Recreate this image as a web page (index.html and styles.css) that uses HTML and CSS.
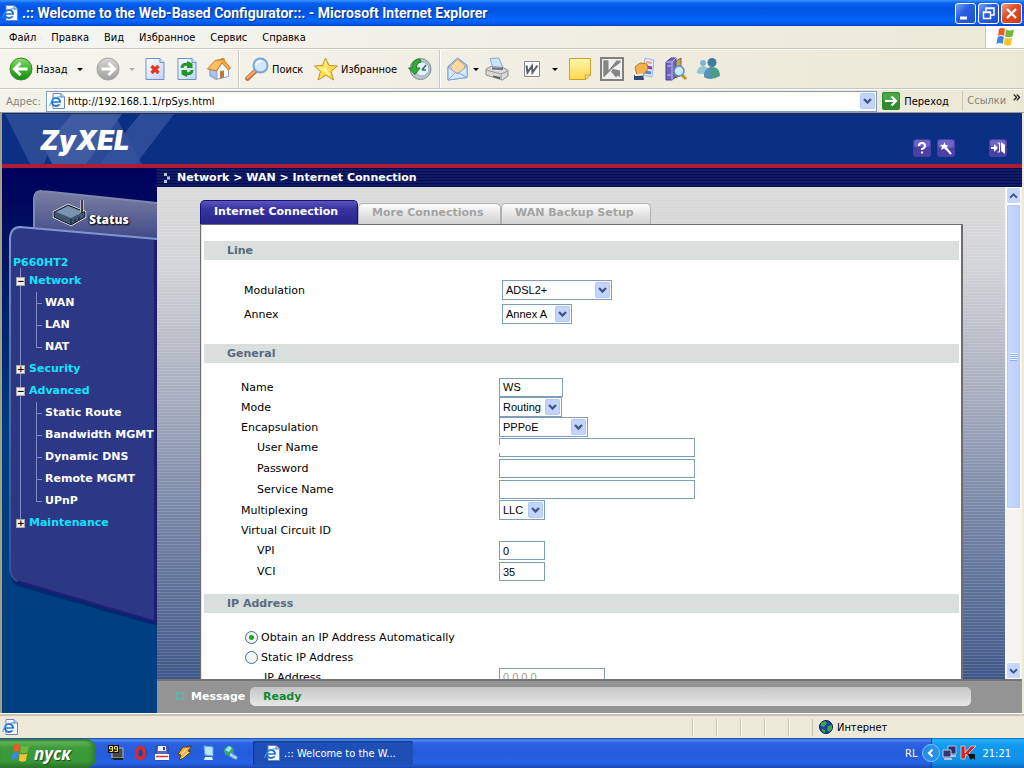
FILE: index.html
```html
<!DOCTYPE html>
<html lang="ru">
<head>
<meta charset="utf-8">
<title>.:: Welcome to the Web-Based Configurator::.</title>
<link rel="stylesheet" href="styles.css">
</head>
<body>
<svg class="defs" aria-hidden="true">
  <defs>
    <linearGradient id="g-green" x1="0" y1="0" x2="0" y2="1"><stop offset="0" stop-color="#8fdc72"/><stop offset=".5" stop-color="#3db52b"/><stop offset="1" stop-color="#1d8a14"/></linearGradient>
    <linearGradient id="g-gray" x1="0" y1="0" x2="0" y2="1"><stop offset="0" stop-color="#d4d4d2"/><stop offset="1" stop-color="#a0a09e"/></linearGradient>
    <linearGradient id="g-page" x1="0" y1="0" x2="1" y2="1"><stop offset="0" stop-color="#fff"/><stop offset="1" stop-color="#bcd2fa"/></linearGradient>
    <linearGradient id="g-note" x1="0" y1="0" x2="0" y2="1"><stop offset="0" stop-color="#fff6ae"/><stop offset="1" stop-color="#ffd84e"/></linearGradient>
    <linearGradient id="g-tab" x1="0" y1="0" x2="0" y2="1"><stop offset="0" stop-color="#7a80a2"/><stop offset="1" stop-color="#3c4586"/></linearGradient>
    <linearGradient id="g-edge" x1="0" y1="0" x2="0" y2="1"><stop offset="0" stop-color="#8398d2"/><stop offset=".3" stop-color="#5a74ba"/><stop offset="1" stop-color="#33509a"/></linearGradient>
    <symbol id="ie" viewBox="0 0 16 16">
      <path d="M4 .5h8l3.500 3.500v11.500H4z" fill="#f4f7ff" stroke="#6f83b5"/><path d="M12 .5V4h3.500" fill="#c9d5f2" stroke="#6f83b5"/>
      <circle cx="7" cy="9" r="4" fill="#fff" stroke="#1d6fd0" stroke-width="2"/><path d="M3 9h8" stroke="#1d6fd0" stroke-width="1.500"/><path d="M9 10.500h3" stroke="#f4f7ff" stroke-width="1.500"/>
      <path d="M1 13C0 8 8 2.500 13 4" fill="none" stroke="#4ba3ef"/>
    </symbol>
    <symbol id="flag" viewBox="0 0 20 20">
      <path d="M4 2Q7 0 10 2L9 9Q6 7 3 9z" fill="#f0582a"/><path d="M11 2.500Q14 4.500 19 2.500L17.500 9.500Q13 11 10 9.500z" fill="#6fb83a"/>
      <path d="M2.800 10Q6 8 8.800 10L7.800 17Q5 15 1.400 17z" fill="#3f86e4"/><path d="M9.800 10.500Q13 12.300 17.200 10.500L15.800 18Q12 19.500 8.800 17.500z" fill="#f7c32e"/>
    </symbol>
    <symbol id="chev" viewBox="0 0 15 16"><rect x=".5" y=".5" width="14" height="15" rx="1" fill="#c4d5fd" stroke="#b3c7f5"/><path d="M4 6l3.500 3.500L11 6" fill="none" stroke="#41588c" stroke-width="2.400"/></symbol>
  </defs>
</svg>

<div class="window">
  <header class="titlebar">
    <svg class="i16"><use href="#ie"/></svg>
    <h1>.:: Welcome to the Web-Based Configurator::. - Microsoft Internet Explorer</h1>
    <div class="winbtns">
      <button aria-label="Свернуть"><svg viewBox="0 0 19 19"><path d="M4 14h7" stroke="#fff" stroke-width="3"/></svg></button>
      <button aria-label="Восстановить"><svg viewBox="0 0 19 19"><path d="M7 7V4h8v7h-3M4.500 8.500h7v6h-7zM4 8h8M7 4.500h8" fill="none" stroke="#fff" stroke-width="1.500"/></svg></button>
      <button class="close" aria-label="Закрыть"><svg viewBox="0 0 19 19"><path d="M5 5l9 9M14 5l-9 9" stroke="#fff" stroke-width="2.400"/></svg></button>
    </div>
  </header>

  <nav class="menubar">
    <button>Файл</button><button>Правка</button><button>Вид</button><button>Избранное</button><button>Сервис</button><button>Справка</button>
    <span class="throbber"><svg viewBox="0 0 20 20"><use href="#flag"/></svg></span>
  </nav>

  <div class="toolbar">
    <button class="tb back"><svg class="i24" viewBox="0 0 24 24"><circle cx="12" cy="12" r="11" fill="url(#g-green)" stroke="#36862a"/><path d="M18.500 12H6M11.500 6L5.500 12l6 6" fill="none" stroke="#fff" stroke-width="3"/></svg><span>Назад</span><i class="drop"></i></button>
    <button class="tb fwd" aria-label="Вперед"><svg class="i24" viewBox="0 0 24 24"><circle cx="12" cy="12" r="11" fill="url(#g-gray)" stroke="#a3a3a0"/><path d="M5.500 12H18M12.500 6l6 6-6 6" fill="none" stroke="#fff" stroke-width="3"/></svg><i class="drop off"></i></button>
    <button class="tb" aria-label="Остановить"><svg class="i24" viewBox="0 0 24 24"><path d="M3 1.500h14l4 4v17H3z" fill="url(#g-page)" stroke="#6d8fcb"/><path d="M17 1.500v4h4" fill="#dfe9fd" stroke="#6d8fcb"/><path d="M8.500 9l7 7M15.500 9l-7 7" stroke="#e8351b" stroke-width="3.400"/></svg></button>
    <button class="tb" aria-label="Обновить"><svg class="i24" viewBox="0 0 24 24"><path d="M3 1.500h14l4 4v17H3z" fill="url(#g-page)" stroke="#6d8fcb"/><path d="M17 1.500v4h4" fill="#dfe9fd" stroke="#6d8fcb"/><path d="M7 11Q7 6.500 13 7.500M17 13Q17 17.500 11 16.500" fill="none" stroke="#1d9a25" stroke-width="3"/><path d="M12 4l5.500 2.500V11H12zM12 20l-5.500-2.500V13H12z" fill="#1d9a25"/></svg></button>
    <button class="tb" aria-label="Домой"><svg class="i24" viewBox="0 0 24 24"><path d="M14 1.500h3.500V7H14z" fill="#b8422a"/><path d="M3 12v7l6 3.500 12.500-3V12L15.500 5z" fill="#f6f8fd" stroke="#8ba4cf"/><path d="M3 12l5-2 2 4v8L3 18z" fill="#a9c4ee" stroke="#8ba4cf"/><path d="M13 14l4-.5v7l-4 1z" fill="#b97a3c"/><path d="M8 3.500L16 2l7.500 9-2 2L15 6l-5.500 8L.5 12z" fill="#f7a73f" stroke="#cc7624"/><path d="M8 4L15 4.500 9 13 1.500 11.500z" fill="#fbc167"/></svg></button>
    <span class="sep"></span>
    <button class="tb search"><svg class="i24" viewBox="0 0 24 24"><path d="M2.500 21.500l8-7.500" stroke="#b8672d" stroke-width="4.500" stroke-linecap="round"/><path d="M2.500 21l7.500-7" stroke="#f2a566" stroke-width="2.500" stroke-linecap="round"/><circle cx="15.500" cy="8.500" r="7" fill="#cfe8fc" stroke="#7ba5d8" stroke-width="2"/><path d="M11 8q1-4 5-4" fill="none" stroke="#fff" stroke-width="2"/></svg><span>Поиск</span></button>
    <button class="tb fav"><svg class="i24" viewBox="0 0 24 24"><path d="M11.500 1l3.500 7.500 8.500.5-6.500 5.500L19.500 23 12 18l-8 5 2.500-8.500L.5 9 8.500 8.500z" fill="#ffe14d" stroke="#c98c1d"/><path d="M11.500 4v11M5 11l6 2M15 18l-3-5" stroke="#fff6b4" stroke-width="1.500"/></svg><span>Избранное</span></button>
    <button class="tb" aria-label="Журнал"><svg class="i24" viewBox="0 0 24 24"><circle cx="12.500" cy="12" r="10.500" fill="#b8c6cf" stroke="#7f9099"/><circle cx="14" cy="12" r="7" fill="#e6f3fc" stroke="#92aabb"/><path d="M14 13l4-5M14 13h4" stroke="#47627e" stroke-width="1.700"/><path d="M12 2Q3 3 4 11H.5L7 17.500 12 11H8.500Q8 6 13 5z" fill="#39a935" stroke="#1c7f22"/></svg></button>
    <span class="sep"></span>
    <button class="tb mail" aria-label="Почта"><svg class="i24" viewBox="0 0 24 24"><path d="M2 9.500L11.500 1 21 8v12.500L2 23z" fill="#a9ccf5" stroke="#6b93cc"/><path d="M5 9l6.500-6.500L18.500 8v6L11 16 5 13z" fill="#ffd9a1" stroke="#e7a35b"/><path d="M2 10l9.500 7L21 9v11.500L2 23z" fill="#d7e9fd" stroke="#7ea4d8"/><path d="M2 23l7.500-7.500M21 20.500L13 16" stroke="#7ea4d8"/></svg><i class="drop"></i></button>
    <button class="tb" aria-label="Печать"><svg class="i24" viewBox="0 0 24 24"><path d="M5 1.500L14 1l4 10H8z" fill="#cfe3fd" stroke="#84a8dd"/><path d="M1 12l5-2.500 12 1 5 3V19l-5.500 4L1 18z" fill="#d9d9d8" stroke="#8e8e92"/><path d="M1 13l15 4 7-3M16 17v6" fill="none" stroke="#98989c"/><path d="M8 18.500l7 1.500v2L8 20z" fill="#57585c"/><path d="M7 11.500l11 .5" stroke="#707178" stroke-width="2"/></svg></button>
    <button class="tb word" aria-label="Word"><svg class="i16" viewBox="0 0 16 16"><path d="M.5.500h15v15H.5z" fill="#fafafa" stroke="#85898d"/><path d="M2.500 4.500l1 7L8 5l.5 6.500 5-7" fill="none" stroke="#5a5e66" stroke-width="2"/></svg><i class="drop"></i></button>
    <button class="tb" aria-label="Заметка"><svg class="i24" viewBox="0 0 24 24"><path d="M1.500 1.500h21V18l-5 4.500h-16z" fill="url(#g-note)" stroke="#d0a02c"/><path d="M17.500 22.500V18h5z" fill="#fff0a0" stroke="#d0a02c"/></svg></button>
    <button class="tb" aria-label="Антивирус"><svg class="i24" viewBox="0 0 24 24"><path d="M1 1h22v22H1z" fill="#f0f0f0" stroke="#808080" stroke-width="2"/><path d="M3.500 3.500h5v10l8-10h4v2L12 12l-8.500 8.500z" fill="#858585"/><path d="M3.500 3.500h4V15l-4 5z" fill="#858585"/><path d="M13 12l7 1.500v7l-2-2-2 2-5-6z" fill="#858585"/></svg></button>
    <button class="tb" aria-label="Публикации"><svg class="i24" viewBox="0 0 24 24"><path d="M13 1l9 2-2 17-10-2z" fill="#e3ebfd" stroke="#9fb2df"/><path d="M14 5l6 1" stroke="#f0a08e" stroke-width="2"/><path d="M14 10l6 1" stroke="#8a3fb5" stroke-width="3"/><path d="M13 15l6 1" stroke="#4a86e8" stroke-width="3"/><path d="M3 10l5-4 7 1 1 5-4 5-7 1z" fill="#f5b24c" stroke="#b77b2b"/><path d="M2 18l9-1 1 6H2z" fill="#35457d"/><path d="M3 17.500l8-1v2L3 19z" fill="#fff"/></svg></button>
    <button class="tb" aria-label="Справочники"><svg class="i24" viewBox="0 0 24 24"><path d="M2 5l5-4h5v19l-4 3H2z" fill="#7166bf" stroke="#443a8c"/><path d="M2 5h6v18M8 5l4-4M3 9h4M3 18h4" fill="none" stroke="#c4bdf2"/><path d="M12 4l5-3v17l-5 3z" fill="#b8a268" stroke="#7d6b39"/><path d="M17 17l5 5" stroke="#c79120" stroke-width="3"/><circle cx="15" cy="14" r="5" fill="#c8ecff" stroke="#5a8bc2" stroke-width="1.500"/></svg></button>
    <button class="tb" aria-label="Messenger"><svg class="i24" viewBox="0 0 24 24"><circle cx="7" cy="6" r="3" fill="#81b7d3"/><path d="M.5 16Q2 9 7 9t5 7q-5 2-11.500 0z" fill="#91c8d0"/><circle cx="16" cy="5.500" r="4.500" fill="#3e7c9a"/><path d="M8 20q0-10 8-10t8 9q-8 5-16 1z" fill="#4a9d86"/><path d="M8 20q0-10 8-10-3 6 0 12-5 0-8-2z" fill="#5b8fbb"/></svg></button>
  </div>

  <form class="address">
    <label for="url">Адрес:</label>
    <div class="urlbox"><svg class="i16"><use href="#ie"/></svg><input id="url" value="http://192.168.1.1/rpSys.html"><button type="button" aria-label="Список"><svg viewBox="0 0 15 16"><use href="#chev"/></svg></button></div>
    <button class="go" type="button"><svg viewBox="0 0 18 18"><rect width="18" height="18" rx="2" fill="#2f8a30"/><rect x="1" y="1" width="16" height="8" rx="2" fill="#4aa748"/><path d="M3 9h11M9.500 4.500L14 9l-4.500 4.500" fill="none" stroke="#fff" stroke-width="2.200"/></svg><span>Переход</span></button>
    <a class="links" href="#">Ссылки</a><span class="more">»</span>
  </form>

  <div class="site">
    <header class="banner">
      <svg class="beams" width="200" height="50" viewBox="0 0 200 50"><path d="M3 0h67L54 20l-12 30H28z" fill="#2b4a96"/><path d="M70 0h42l28 50H52l-10-18z" fill="#2b4a96"/><path d="M70 0L42 34l8 16h34l36-50z" fill="#4560a5" opacity=".8"/><path d="M138 0h34l-38 50H98z" fill="#34539d" opacity=".8"/></svg>
      <a class="logo" href="#">ZyXEL</a>
      <div class="tools">
        <button aria-label="Help"><svg viewBox="0 0 18 18"><rect width="18" height="18" rx="3" fill="#4a3fa4"/><rect x="1" y="1" width="16" height="7" rx="3" fill="#6b64c6"/><path d="M6 7Q6 4 9 4t3 3q0 2-3 3v1" fill="none" stroke="#fff" stroke-width="2"/><path d="M8 12.500h2v2H8z" fill="#fff"/></svg></button>
        <button aria-label="Wizard"><svg viewBox="0 0 18 18"><rect width="18" height="18" rx="3" fill="#4a3fa4"/><rect x="1" y="1" width="16" height="8" rx="3" fill="#6b64c6"/><path d="M8 8l6 7" stroke="#fff" stroke-width="2"/><path d="M7.500 3l1 3 3 .5-2.500 2 .5 3-2.500-2-3 1.500 1-3L3 6l3.500-.2z" fill="#fff"/></svg></button>
        <button class="exit" aria-label="Logout"><svg viewBox="0 0 18 18"><rect width="18" height="18" rx="3" fill="#4a3fa4"/><rect x="1" y="1" width="16" height="7" rx="3" fill="#6b64c6"/><path d="M2 8h3V5l4 4-4 4v-3H2zM12 3l4 3v9l-4-3z" fill="#fff"/><path d="M8.500 4h2v9h-2" fill="none" stroke="#fff"/></svg></button>
      </div>
    </header>

    <div class="frames">
      <aside class="side">
        <svg class="sideart" width="155" height="470" viewBox="0 0 155 470">
          <path d="M32 62V30q1-8 8-7l115 12v40H32z" fill="url(#g-tab)"/><path d="M32 62V30q1-8 8-7l115 12" fill="none" stroke="#8087ae" stroke-width="2"/>
          <path d="M8 406V70q1-11 10-11L155 71v387L15 418q-6-3-7-12z" fill="#00155a" opacity=".5"/>
          <path d="M8 402V70q1-11 10-11L155 71v383L15 413q-6-3-7-11z" fill="#2c3786"/>
          <path d="M15 413q-6-3-7-11V70q1-11 10-11L155 71" fill="none" stroke="url(#g-edge)" stroke-width="2"/><path d="M18 414l137 40" stroke="#241c7c" stroke-width="2"/>
          <path d="M153.500 72v382" stroke="#201c70" stroke-width="3"/>
          <path d="M52 44l14-7 17 7v5l-14 8-17-8z" fill="#1c2a3c" stroke="#fff" stroke-width="2.400"/><path d="M52 44l14-7 17 7v5l-14 8-17-8z" fill="#405670" stroke="#0d131d"/><path d="M54 44l12-6 15 6-12 6z" fill="#7a93ae"/><path d="M69 51v5M73 51v3M77 49v3" stroke="#131f30"/><path d="M80 44V32" stroke="#fff" stroke-width="3"/><path d="M80 45V32" stroke="#000" stroke-width="1.500"/>
        </svg>
        <a class="status" href="#">Status</a>
        <nav class="tree">
          <a class="root" href="#">P660HT2</a>
          <ul class="l1">
            <li><button class="box" aria-label="Collapse">−</button><a href="#">Network</a>
              <ul><li><a href="#">WAN</a></li><li><a href="#">LAN</a></li><li><a href="#">NAT</a></li></ul></li>
            <li><button class="box" aria-label="Expand">+</button><a href="#">Security</a></li>
            <li><button class="box" aria-label="Collapse">−</button><a href="#">Advanced</a>
              <ul><li><a href="#">Static Route</a></li><li><a href="#">Bandwidth MGMT</a></li><li><a href="#">Dynamic DNS</a></li><li><a href="#">Remote MGMT</a></li><li><a href="#">UPnP</a></li></ul></li>
            <li><button class="box" aria-label="Expand">+</button><a href="#">Maintenance</a></li>
          </ul>
        </nav>
      </aside>

      <main class="main">
        <div class="crumbs"><svg viewBox="0 0 8 10"><path d="M1 0h3v3H1zM4 3.500h3v3H4zM1 7h3v3H1z" fill="#b9c3dd"/></svg>Network &gt; WAN &gt; Internet Connection</div>
        <div class="view">
          <div class="pane">
            <div class="tabs"><button class="on">Internet Connection</button><button class="more-tab">More Connections</button><button class="backup-tab">WAN Backup Setup</button></div>
            <form class="sheet">
              <h2>Line</h2>
              <div class="rows line">
                <div class="row r24"><label for="mod">Modulation</label><span class="sel w110"><select id="mod"><option>ADSL2+</option></select><svg viewBox="0 0 15 16"><use href="#chev"/></svg></span></div>
                <div class="row r24"><label for="annex">Annex</label><span class="sel w70"><select id="annex"><option>Annex A</option></select><svg viewBox="0 0 15 16"><use href="#chev"/></svg></span></div>
              </div>
              <h2>General</h2>
              <div class="rows general">
                <div class="row"><label for="name">Name</label><input class="w64" id="name" value="WS"></div>
                <div class="row"><label for="mode">Mode</label><span class="sel w63"><select id="mode"><option>Routing</option></select><svg viewBox="0 0 15 16"><use href="#chev"/></svg></span></div>
                <div class="row"><label for="enc">Encapsulation</label><span class="sel w89"><select id="enc"><option>PPPoE</option></select><svg viewBox="0 0 15 16"><use href="#chev"/></svg></span></div>
                <div class="row r21"><label class="sub" for="user">User Name</label><span class="field"><input class="w196" id="user"><i class="gapmark"></i></span></div>
                <div class="row r21"><label class="sub" for="pass">Password</label><input class="w196" id="pass" type="password"></div>
                <div class="row r21"><label class="sub" for="svc">Service Name</label><input class="w196" id="svc"></div>
                <div class="row"><label for="mux">Multiplexing</label><span class="sel w46"><select id="mux"><option>LLC</option></select><svg viewBox="0 0 15 16"><use href="#chev"/></svg></span></div>
                <div class="row"><span>Virtual Circuit ID</span></div>
                <div class="row r21"><label class="sub" for="vpi">VPI</label><input class="w46" id="vpi" value="0"></div>
                <div class="row r21"><label class="sub" for="vci">VCI</label><input class="w46" id="vci" value="35"></div>
              </div>
              <h2>IP Address</h2>
              <div class="rows ip">
                <label class="radio"><input type="radio" name="ip" checked>Obtain an IP Address Automatically</label>
                <label class="radio"><input type="radio" name="ip">Static IP Address</label>
                <div class="row"><label class="sub2" for="ipa">IP Address</label><input class="w106" id="ipa" value="0.0.0.0" disabled></div>
              </div>
            </form>
          </div>
          <div class="scroll"><button aria-label="Up"><svg viewBox="0 0 15 16"><path d="M3.500 10l4-4 4 4" fill="none" stroke="#41588c" stroke-width="2.200"/></svg></button><div class="thumb"><i></i></div><button aria-label="Down"><svg viewBox="0 0 15 16"><path d="M3.500 6l4 4 4-4" fill="none" stroke="#41588c" stroke-width="2.200"/></svg></button></div>
        </div>
        <footer class="message"><svg viewBox="0 0 8 8"><path d="M0 0h3v3H0zM5 0h3v3H5zM0 5h3v3H0zM5 5h3v3H5z" fill="#58b9ad"/></svg><span>Message</span><output>Ready</output></footer>
      </main>
    </div>
  </div>

  <footer class="statusbar"><svg class="i16"><use href="#ie"/></svg><span class="cells"><i></i><i></i><i></i><i></i><i></i></span><span class="zone"><svg viewBox="0 0 14 14"><circle cx="7" cy="7" r="6.500" fill="#1b3fae" stroke="#0a1b4d"/><path d="M2 3l4-2 2 2-3 4-3-1zM9 6l4-1v4l-3 3-2-3zM3 9l3 1v3l-3-2z" fill="#37b03a"/></svg>Интернет</span></footer>
</div>

<footer class="taskbar">
  <button class="start"><svg viewBox="0 0 20 20"><use href="#flag"/></svg>пуск</button>
  <div class="quick">
    <svg viewBox="0 0 16 16"><path d="M4 3h11v10H4z" fill="#474b50" stroke="#b4b8b8"/><path d="M3 13h12v2H6z" fill="#1d2124"/><path d="M0 0h11v8H0z" fill="#111"/><path d="M4.500 4H1.500V1.500h3v5H1.500M9.500 4H6.500V1.500h3v5H6.500" fill="none" stroke="#ffee2c"/></svg>
    <svg viewBox="0 0 16 16"><ellipse cx="11" cy="8" rx="5" ry="6.500" fill="#25347d" opacity=".6"/><ellipse cx="9.500" cy="8" rx="4" ry="5.500" fill="none" stroke="#da2a2c" stroke-width="3.500"/></svg>
    <svg viewBox="0 0 16 16"><path d="M2 1h12v14H2z" fill="#5a68c4" stroke="#333f98"/><path d="M4 1h8v5H4z" fill="#eef"/><path d="M9 2h2v3H9z" fill="#333f98"/><path d="M1 9h14v6H1z" fill="#fff"/><path d="M2 11.500h12" stroke="#d33" stroke-width="1.500"/></svg>
    <svg viewBox="0 0 16 16"><path d="M6 2L1 9l3 1-2 5 3-1 9-7-3-1 4-5-4 1z" fill="#f4b33a" stroke="#5f3a08"/><path d="M4 10l6-7M5 13l7-6" stroke="#fff3c4"/></svg>
    <svg viewBox="0 0 16 16"><path d="M4 1l9 1v9l-8-1z" fill="#b5e5ff" stroke="#5da8e8"/><path d="M5 12l7 0 1 3H4z" fill="#e5eefc"/></svg>
    <svg viewBox="0 0 16 16"><circle cx="6" cy="6" r="5" fill="#3aa66d"/><path d="M2 5l4-4 3 2-3 4z" fill="#a3e0f3"/><path d="M7 7l8 5-2 3-7-4z" fill="#a5d5f2" stroke="#4681c0"/></svg>
  </div>
  <button class="task"><svg class="i16"><use href="#ie"/></svg><span>.:: Welcome to the W...</span></button>
  <span class="lang">RL</span>
  <div class="tray">
    <button aria-label="Показать значки"><svg viewBox="0 0 18 18"><circle cx="9" cy="9" r="8.500" fill="#2a8ee8" stroke="#7cc4f8"/><path d="M10.500 5.500L7 9l3.500 3.500" fill="none" stroke="#fff" stroke-width="2"/></svg></button>
    <svg viewBox="0 0 16 16"><path d="M6 1h8v8H6z" fill="#2a3168" stroke="#b9bedb"/><path d="M1 5h8v7H1z" fill="#35366e" stroke="#c7c9e2"/><path d="M2 14h8M9 11h5" stroke="#bbc0de" stroke-width="2"/></svg>
    <svg viewBox="0 0 16 16"><path d="M1 1h4v7L11 1h5L9 8l2 3-2 1-3-3-1 5H1z" fill="#e31b1b" stroke="#fff" stroke-width=".6"/><path d="M8 9l7 0v6l-2-2-2 2-2-3z" fill="#111"/></svg>
    <time>21:21</time>
  </div>
</footer>
</body>
</html>
```
FILE: styles.css
```css
* { box-sizing: border-box; }
body {
  margin: 0;
  height: 100vh;
  display: flex;
  flex-direction: column;
  overflow: hidden;
  background: #ece9d8;
  font: 11px "DejaVu Sans Condensed", "DejaVu Sans", sans-serif;
  color: #000;
}
button, input, select { font: inherit; color: inherit; margin: 0; }
button { border: 0; padding: 0; background: none; }
a { color: inherit; text-decoration: none; }
ul { list-style: none; margin: 0; padding: 0; }
svg { display: block; flex: none; }
.defs { position: absolute; width: 0; height: 0; }
.i16 { width: 16px; height: 16px; }
.i24 { width: 24px; height: 24px; }

.window { flex: 1; min-height: 0; display: flex; flex-direction: column; }

/* Title bar */
.titlebar {
  flex: none;
  height: 26px;
  display: flex;
  align-items: center;
  gap: 4px;
  padding: 0 2px;
  background: linear-gradient(#3c95ff 0, #0a62f0 3px, #0054e4 8px, #0058ea 14px, #0468fe 20px, #0458e4 24px, #003fc0 26px);
}
.titlebar h1 {
  flex: 1;
  margin: 0;
  font: bold 14px Roboto, sans-serif;
  color: #fff;
  text-shadow: 1px 1px #0a2a8a;
  white-space: nowrap;
}
.winbtns { display: flex; gap: 2px; }
.winbtns button {
  width: 21px;
  height: 21px;
  border: 1px solid #fff;
  border-radius: 3px;
  background: linear-gradient(135deg, #7aa2f6, #2a5fe0 40%, #1d4fce);
}
.winbtns .close { background: linear-gradient(135deg, #f0a084, #e0502c 40%, #c93a16); }

/* Menu */
.menubar {
  flex: none;
  height: 23px;
  display: flex;
  align-items: center;
  gap: 15px;
  padding-left: 9px;
  background: linear-gradient(90deg, #f5f5f2, #ece9d8);
  border-bottom: 1px solid #c6c8b2;
}
.throbber {
  margin-left: auto;
  align-self: stretch;
  width: 39px;
  background: #fff;
  border-left: 1px solid #c9c7ba;
  display: grid;
  place-items: center;
}
.throbber svg { width: 20px; height: 20px; }

/* Toolbar */
.toolbar {
  flex: none;
  height: 40px;
  display: flex;
  align-items: center;
  padding-left: 9px;
  background: linear-gradient(90deg, #f5f4ee, #ece8d6);
  border-top: 1px solid #fff;
  border-bottom: 1px solid #c6c8c0;
}
.tb { width: 32px; height: 32px; display: flex; align-items: center; justify-content: center; gap: 3px; flex: none; }
.back, .fwd, .search, .fav, .mail, .word { justify-content: flex-start; }
.back { width: 87px; }
.fwd { width: 43px; }
.search { width: 69px; }
.fav { width: 90px; }
.mail { width: 35px; }
.word { width: 40px; }
.drop { border: 3px solid transparent; border-top-color: #000; border-bottom: 0; }
.back .drop { margin-left: 6px; }
.fwd .drop { margin-left: 6px; }
.word .drop { margin-left: 9px; }
.word { margin-left: 11px; }
.drop.off { border-top-color: #b4b2a6; }
.sep { align-self: stretch; width: 2px; margin: 0 5px 0 3px; border-left: 1px solid #cbc9bb; border-right: 1px solid #fff; }

/* Address */
.address {
  flex: none;
  height: 24px;
  display: flex;
  align-items: center;
  padding: 1px 3px 1px 6px;
  gap: 5px;
  background: linear-gradient(90deg, #f3f2ea, #ebe8d6);
  border-top: 1px solid #fff;
  border-bottom: 1px solid #9a9a8c;
}
.address label, .links { color: #85837a; }
.urlbox {
  flex: 1;
  height: 21px;
  display: flex;
  align-items: center;
  gap: 3px;
  padding: 0 1px 0 2px;
  border: 1px solid #7f9db9;
  background: #fff;
}
.urlbox input { flex: 1; min-width: 0; border: 0; padding: 0; outline: 0; }
.urlbox button svg { width: 15px; height: 18px; }
.go { display: flex; align-items: center; gap: 4px; width: 75px; }
.go svg { width: 18px; height: 18px; }
.links { border-left: 1px solid #c9c7ba; padding-left: 4px; line-height: 20px; }
.more { font-size: 16px; line-height: 12px; align-self: flex-start; margin-left: 1px; }

/* Router site */
.site {
  flex: 1;
  min-height: 0;
  display: flex;
  flex-direction: column;
  border-left: 2px solid #a39f84;
  border-right: 2px solid #ece9d8;
  font-family: "DejaVu Sans", sans-serif;
}
.banner {
  flex: none;
  position: relative;
  height: 55px;
  display: flex;
  align-items: center;
  padding: 4px 15px 0 38px;
  background: #0b2f83;
  border-bottom: 4px solid #b01c37;
}
.beams { position: absolute; left: 0; top: 1px; }
.logo {
  position: relative;
  color: #fff;
  font: italic 900 27px Inter, "Liberation Sans", sans-serif;
}
.tools { margin-left: auto; padding-top: 14px; display: flex; gap: 6px; }
.tools svg { width: 18px; height: 18px; }
.exit { margin-left: 28px; }
.frames { flex: 1; min-height: 0; display: flex; }

/* Sidebar */
.side {
  flex: none;
  position: relative;
  width: 155px;
  background: linear-gradient(#00005c, #000f60 60px, #003d80 260px, #004080);
  color: #fff;
  font-weight: bold;
}
.sideart { position: absolute; left: 0; top: 0; }
.status {
  position: relative;
  display: block;
  padding: 44px 0 0 87px;
  font: 800 12px/15px "Open Sans", sans-serif;
  text-shadow: 1px 1px 2px #000, -1px 0 1px #000;
}
.tree { position: relative; padding: 29px 0 0 11px; color: #12e4fb; white-space: nowrap; }
.root { display: block; line-height: 14px; }
.l1 { position: relative; }
.l1::before { content: ""; position: absolute; left: 7px; top: -2px; bottom: 11px; border-left: 1px solid #7f8cc4; }
.l1 > li > a { display: block; padding-left: 16px; line-height: 22px; }
.l1 > li { position: relative; }
.box {
  position: absolute;
  left: 3px;
  top: 7px;
  width: 9px;
  height: 9px;
  border: 1px solid #a9a9a9;
  background: #f1eee8;
  color: #000;
  font: bold 9px/7px "DejaVu Sans", sans-serif;
}
.l1 ul { margin-left: 23px; color: #fff; }
.l1 ul li { position: relative; padding-left: 9px; line-height: 22px; }
.l1 ul li::before { content: ""; position: absolute; left: 0; top: 0; width: 5px; height: 11px; border-left: 1px solid #7f8cc4; border-bottom: 1px solid #7f8cc4; }
.l1 ul li::after { content: ""; position: absolute; left: 0; top: 11px; bottom: 0; border-left: 1px solid #7f8cc4; }
.l1 ul li:last-child::after { display: none; }

/* Main frame */
.main { flex: 1; min-width: 0; display: flex; flex-direction: column; }
.crumbs {
  flex: none;
  height: 19px;
  display: flex;
  align-items: center;
  gap: 6px;
  padding-left: 6px;
  background: repeating-linear-gradient(#040a4a 0 1px, #101c68 1px 3px);
  color: #fff;
  font-weight: bold;
}
.crumbs svg { width: 8px; height: 10px; }
.view {
  flex: 1;
  min-height: 0;
  display: flex;
  overflow: hidden;
}
.pane {
  flex: 1;
  padding: 13px 42px 0 43px;
  background:
    repeating-linear-gradient(rgba(255, 255, 255, .14) 0 1px, transparent 1px 3px),
    linear-gradient(#dbdbdb, #d2d3d6 80px, #a9afbf 200px, #7585a5 330px, #445b8a 480px, #3a5487);
}
.tabs { display: flex; align-items: flex-end; height: 24px; }
.tabs button {
  height: 21px;
  padding: 0 0 3px 13px;
  border: 1px solid #b0b0b0;
  border-bottom: 0;
  border-radius: 5px 5px 0 0;
  background: linear-gradient(#fdfdfd, #e6e6e6 50%, #d2d2d2);
  color: #a3a3a3;
  font-weight: bold;
  text-align: left;
  white-space: nowrap;
}
.tabs .on {
  width: 158px;
  height: 24px;
  border-color: #131376;
  background: linear-gradient(#5a54c0, #37329e 8px, #29258c);
  color: #fff;
}
.tabs .more-tab { width: 143px; }
.tabs .backup-tab { width: 150px; }
.sheet {
  padding: 16px 2px 0 3px;
  min-height: 600px;
  background: #fff;
  border: 1px solid #6d6d6d;
  border-width: 1px 2px 0 1px;
  box-shadow: inset 1px 0 #e4e4e4;
}
.sheet h2 {
  margin: 0;
  padding-left: 23px;
  font: bold 11px/19px "DejaVu Sans", sans-serif;
  color: #586a7e;
  background: #d8dfdd;
}
.rows { padding: 14px 0 12px 37px; }
.line { padding: 18px 0 18px 40px; }
.row { display: grid; grid-template-columns: 258px auto; justify-content: start; align-items: center; height: 20px; }
.r21 { height: 21px; }
.r24 { height: 24px; }
.sub { padding-left: 16px; }
.sub2 { padding-left: 23px; }
.sheet input, .sel select {
  height: 19px;
  padding: 0 3px;
  border: 1px solid #7f9db9;
  border-radius: 0;
  background: #fff;
  outline: 0;
  font: 11px "Liberation Sans", Arial, sans-serif;
}
.sheet input:disabled { color: #a09d8c; }
.sel { position: relative; display: block; }
.sel select { appearance: none; width: 100%; height: 20px; display: block; }
.sel svg { position: absolute; right: 2px; top: 2px; width: 15px; height: 16px; pointer-events: none; }
.field { position: relative; display: flex; }
.gapmark { position: absolute; left: 0; top: 7px; width: 1px; height: 8px; background: #fff; }
.w46 { width: 46px; }
.w63 { width: 63px; }
.w64 { width: 64px; }
.w70 { width: 70px; }
.w89 { width: 89px; }
.w106 { width: 106px; }
.w110 { width: 110px; }
.w196 { width: 196px; }
.radio { display: flex; align-items: center; gap: 3px; height: 20px; padding-left: 4px; }
.sheet .radio input {
  appearance: none;
  width: 13px;
  height: 13px;
  padding: 0;
  border: 1px solid #3f6a98;
  border-radius: 50%;
  background: #f4f4f0;
}
.sheet .radio input:checked { background: radial-gradient(#29a329 0 2px, #f4f4f0 3px); }

/* Scroll bar */
.scroll { flex: none; width: 17px; display: flex; flex-direction: column; background: #f4f3ee; padding: 0 1px; }
.scroll button { flex: none; height: 17px; border: 1px solid #fff; border-radius: 2px; background: #c6d6fd; }
.scroll svg { width: 13px; height: 14px; }
.thumb { flex: 306; margin-bottom: 153px; border: 1px solid #fff; border-radius: 2px; background: linear-gradient(90deg, #c9d8fd, #bccefa); display: grid; place-items: center; box-shadow: inset 0 0 0 1px #b5c8f4; }
.thumb i { width: 7px; height: 8px; background: repeating-linear-gradient(#eef4fe 0 1px, #8cb0f8 1px 2px); }

/* Message bar */
.message {
  flex: none;
  height: 34px;
  display: flex;
  align-items: center;
  padding: 0 51px 2px 19px;
  border-top: 2px solid #747474;
  background: #949494;
  color: #fff;
  font-weight: bold;
}
.message svg { width: 8px; height: 8px; }
.message span { width: 66px; padding-left: 7px; }
.message output { flex: 1; height: 19px; line-height: 19px; padding-left: 13px; border-radius: 5px; color: #0c8a32; background: linear-gradient(#c5c5c5, #e8e8e8); }

/* IE status bar */
.statusbar {
  flex: none;
  height: 25px;
  display: flex;
  align-items: center;
  padding: 2px 0 0 2px;
  border-top: 1px solid #fff;
  box-shadow: inset 0 2px #c6c3b4;
}
.cells { margin-left: auto; display: flex; }
.cells i { width: 24px; height: 17px; border-left: 1px solid #c6c3b4; box-shadow: inset 1px 0 #fff; }
.zone { width: 212px; display: flex; align-items: center; gap: 4px; padding-left: 6px; height: 17px; border-left: 1px solid #c6c3b4; }
.zone svg { width: 14px; height: 14px; }

/* Taskbar */
.taskbar {
  flex: none;
  height: 30px;
  display: flex;
  align-items: center;
  color: #fff;
  background: linear-gradient(#1941a5 0, #4b8ff4 2px, #2a62e0 5px, #245bdb 15px, #2663e4 25px, #1c47b0 30px);
}
.start {
  width: 96px;
  height: 29px;
  display: flex;
  align-items: center;
  gap: 4px;
  padding-left: 10px;
  border-radius: 0 10px 10px 0;
  background: linear-gradient(#2f7a30, #62b455 3px, #3c9a3a 9px, #3a9838 22px, #2a742a);
  box-shadow: inset -3px 0 4px #2a7a2c;
  font: italic bold 17px "Open Sans", sans-serif;
  text-shadow: 1px 1px 1px #1c4a1c;
}
.start svg { width: 20px; height: 20px; }
.quick { display: flex; gap: 7px; margin-left: 12px; }
.quick svg { width: 16px; height: 16px; }
.task {
  width: 160px;
  height: 24px;
  display: flex;
  align-items: center;
  gap: 4px;
  margin-left: 14px;
  padding-left: 11px;
  border-radius: 2px;
  background: #1d4fb6;
  box-shadow: inset 1px 1px 1px #10338a;
}
.lang { margin-left: auto; width: 17px; }
.tray {
  width: 93px;
  height: 30px;
  display: flex;
  align-items: center;
  gap: 2px;
  margin-left: 9px;
  border-left: 1px solid #0e4aa8;
  background: linear-gradient(#0f6ac8 0, #2bb4f8 2px, #129cf0 6px, #0f8ee8 24px, #0c68c0 30px);
}
.tray button { width: 18px; margin-left: -10px; }
.tray svg { width: 16px; height: 16px; }
.tray button svg { width: 18px; height: 18px; }
.tray time { margin-left: auto; padding-right: 13px; }
```
